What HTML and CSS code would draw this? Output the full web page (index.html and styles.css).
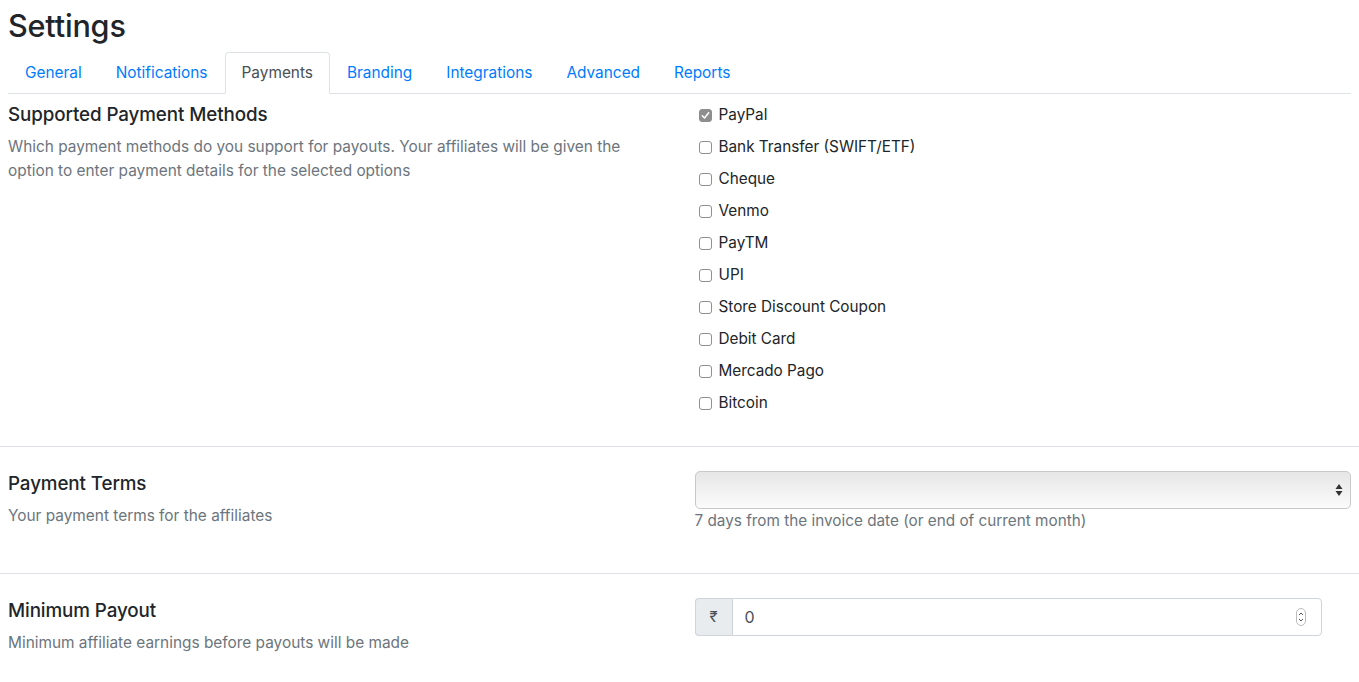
FILE: index.html
```html
<!DOCTYPE html>
<html lang="en">
<head>
<meta charset="utf-8">
<title>Settings</title>
<link rel="stylesheet" href="styles.css">
</head>
<body>
<div class="page">
  <h2 class="page-title">Settings</h2>
  <ul class="tabs">
    <li><a class="tab">General</a></li>
    <li><a class="tab">Notifications</a></li>
    <li><a class="tab active">Payments</a></li>
    <li><a class="tab">Branding</a></li>
    <li><a class="tab">Integrations</a></li>
    <li><a class="tab">Advanced</a></li>
    <li><a class="tab">Reports</a></li>
  </ul>
</div>

<section class="section first">
  <div class="col">
    <h5 class="sec-title">Supported Payment Methods</h5>
    <p class="sec-desc">Which payment methods do you support for payouts. Your affiliates will be given the option to enter payment details for the selected options</p>
  </div>
  <div class="col">
    <label class="check"><span class="box checked"><svg viewBox="0 0 13 13" width="13" height="13"><path d="M3.3 6.8 L5.5 9 L9.7 3.8" fill="none" stroke="#fff" stroke-width="1.6" stroke-linecap="round" stroke-linejoin="round"/></svg></span>PayPal</label>
    <label class="check"><span class="box"></span>Bank Transfer (SWIFT/ETF)</label>
    <label class="check"><span class="box"></span>Cheque</label>
    <label class="check"><span class="box"></span>Venmo</label>
    <label class="check"><span class="box"></span>PayTM</label>
    <label class="check"><span class="box"></span>UPI</label>
    <label class="check"><span class="box"></span>Store Discount Coupon</label>
    <label class="check"><span class="box"></span>Debit Card</label>
    <label class="check"><span class="box"></span>Mercado Pago</label>
    <label class="check"><span class="box"></span>Bitcoin</label>
  </div>
</section>

<section class="section">
  <div class="col">
    <h5 class="sec-title">Payment Terms</h5>
    <p class="sec-desc">Your payment terms for the affiliates</p>
  </div>
  <div class="col control-col">
    <div class="form-group">
      <div class="select">
        <span class="select-arrows"><svg viewBox="0 0 8 14" width="8" height="14"><path d="M4 1 L7.5 6 L0.5 6 Z M4 13 L0.5 8 L7.5 8 Z" fill="#333"/></svg></span>
      </div>
      <div class="help">7 days from the invoice date (or end of current month)</div>
    </div>
  </div>
</section>

<section class="section">
  <div class="col">
    <h5 class="sec-title">Minimum Payout</h5>
    <p class="sec-desc">Minimum affiliate earnings before payouts will be made</p>
  </div>
  <div class="col control-col">
    <div class="input-group">
      <span class="prepend">₹</span>
      <div class="input">
        <span class="value">0</span>
        <span class="spin"><svg viewBox="0 0 10 18" width="10" height="18"><rect x="0.5" y="0.5" width="9" height="17" rx="4.5" fill="#fff" stroke="#bbb"/><path d="M3 7 L5 5 L7 7 M3 11 L5 13 L7 11" fill="none" stroke="#555" stroke-width="1"/></svg></span>
      </div>
    </div>
  </div>
</section>
</body>
</html>
```

FILE: styles.css
```css
* { box-sizing: border-box; }
html, body { margin: 0; padding: 0; background: #fff; }
body {
  font-family: Inter, "Noto Sans", "Liberation Sans", sans-serif;
  font-size: 16px;
  line-height: 24px;
  color: #212529;
}
.page { padding: 0 8px; }
.page-title {
  margin: 0;
  padding-top: 7px;
  font-size: 30.6px;
  line-height: 38px;
  font-weight: 500;
  color: #212529;
  letter-spacing: -0.2px;
}
.tabs {
  list-style: none;
  margin: 7px 0 0;
  padding: 0;
  display: flex;
  border-bottom: 1px solid #dee2e6;
}
.tabs li { margin-bottom: -1px; }
.tab {
  display: block;
  padding: 8px 16px;
  border: 1px solid transparent;
  border-top-left-radius: 4px;
  border-top-right-radius: 4px;
  color: #007bff;
  font-size: 15.4px;
  line-height: 24px;
}
.tab.active {
  color: #495057;
  background: #fff;
  border-color: #dee2e6 #dee2e6 #fff;
}
.section {
  display: grid;
  grid-template-columns: 1fr 1fr;
  column-gap: 30px;
  padding: 25px 8px 23px;
  border-top: 1px solid #dee2e6;
}
.section.first { border-top: 0; padding-top: 9px; }
.col { min-width: 0; }
.control-col { margin-top: -1px; }
.sec-title {
  margin: 0 0 8px;
  font-size: 18.8px;
  line-height: 24px;
  font-weight: 500;
  letter-spacing: -0.1px;
}
.sec-desc {
  margin: 0;
  color: #6c757d;
  font-size: 15.4px;
}
.check {
  display: flex;
  align-items: center;
  margin-bottom: 8px;
  font-size: 15.3px;
  line-height: 24px;
  color: #212529;
}
.box {
  width: 13px;
  height: 13px;
  margin-left: 4px;
  margin-right: 7px;
  border: 1px solid #8f8f8f;
  border-radius: 3px;
  background: #fff;
  display: inline-flex;
  flex: none;
}
.box.checked { background: #8e8e8e; border-color: #8e8e8e; }
.box svg { display: block; margin: -1px; }
.form-group { margin-bottom: 17px; }
.select {
  height: 38px;
  border: 1px solid #c9c9c9;
  border-radius: 5px;
  background: linear-gradient(#e6e6e6, #fbfbfb);
  display: flex;
  align-items: center;
  justify-content: flex-end;
  padding-right: 7px;
}
.select-arrows svg { display: block; }
.help {
  color: #6c757d;
  font-size: 15.3px;
  line-height: 24px;
}
.input-group {
  display: flex;
  width: 627px;
  height: 38px;
}
.prepend {
  width: 37px;
  display: flex;
  align-items: center;
  justify-content: center;
  background: #e9ecef;
  border: 1px solid #ced4da;
  border-right: 0;
  border-radius: 4px 0 0 4px;
  color: #495057;
  font-size: 15px;
}
.input {
  flex: 1;
  display: flex;
  align-items: center;
  justify-content: space-between;
  border: 1px solid #ced4da;
  border-radius: 0 4px 4px 0;
  padding: 0 15px 0 12px;
  color: #495057;
}
.value { font-size: 16px; }
.spin svg { display: block; }
```
